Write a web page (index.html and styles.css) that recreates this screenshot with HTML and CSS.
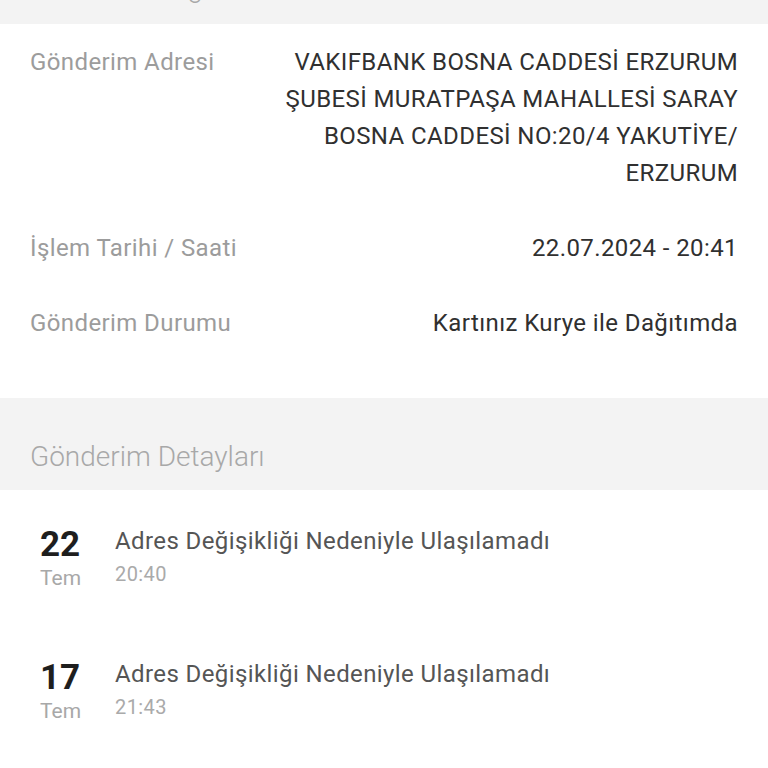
FILE: index.html
```html
<!DOCTYPE html>
<html lang="tr">
<head>
<meta charset="utf-8">
<link rel="stylesheet" href="styles.css">
</head>
<body>
<div class="section-head top"><span>Gönderim Bilgileri</span></div>
<div class="info">
  <div class="row">
    <div class="label">Gönderim Adresi</div>
    <div class="value addr">VAKIFBANK BOSNA CADDESİ ERZURUM ŞUBESİ MURATPAŞA MAHALLESİ SARAY BOSNA CADDESİ NO:20/4 YAKUTİYE/ ERZURUM</div>
  </div>
  <div class="row">
    <div class="label">İşlem Tarihi / Saati</div>
    <div class="value">22.07.2024 - 20:41</div>
  </div>
  <div class="row">
    <div class="label">Gönderim Durumu</div>
    <div class="value">Kartınız Kurye ile Dağıtımda</div>
  </div>
</div>
<div class="section-head mid"><span>Gönderim Detayları</span></div>
<div class="timeline">
  <div class="item">
    <div class="date"><div class="day">22</div><div class="mon">Tem</div></div>
    <div class="body"><div class="title">Adres Değişikliği Nedeniyle Ulaşılamadı</div><div class="time">20:40</div></div>
  </div>
  <div class="item">
    <div class="date"><div class="day">17</div><div class="mon">Tem</div></div>
    <div class="body"><div class="title">Adres Değişikliği Nedeniyle Ulaşılamadı</div><div class="time">21:43</div></div>
  </div>
</div>
</body>
</html>
```
FILE: styles.css
```css
html, body {
  margin: 0;
  padding: 0;
  background: #fff;
  font-family: Roboto, "Noto Sans", sans-serif;
  overflow: hidden;
}
.section-head {
  background: #f3f3f3;
  padding: 0 30px;
  color: #a8a8a8;
  font-size: 28px;
  font-weight: 300;
}
.section-head.top {
  height: 24px;
  overflow: hidden;
}
.section-head.top span {
  display: block;
  margin-top: -29px;
  line-height: 34px;
}
.section-head.mid {
  height: 92px;
  box-sizing: border-box;
  padding-top: 42px;
  line-height: 34px;
}
.info {
  padding: 20px 30px 56px 30px;
}
.row {
  display: flex;
  justify-content: space-between;
  align-items: flex-start;
  margin-bottom: 38px;
}
.row:last-child { margin-bottom: 0; }
.label {
  color: #9c9c9c;
  font-size: 24px;
  letter-spacing: 0.4px;
  line-height: 37px;
  white-space: nowrap;
}
.value {
  color: #303030;
  font-size: 24px;
  letter-spacing: 0.4px;
  line-height: 37px;
  text-align: right;
}
.addr {
  width: 470px;
}
.timeline {
  padding: 38px 0 0 40px;
}
.item {
  display: flex;
  margin-bottom: 67px;
}
.date {
  width: 75px;
}
.day {
  font-size: 35px;
  font-weight: 700;
  color: #1e1e1e;
  line-height: 34px;
}
.mon {
  color: #a8a8a8;
  font-size: 21px;
  line-height: 32px;
}
.body {
  margin-top: -4px;
}
.title {
  color: #555;
  font-size: 24px;
  letter-spacing: 0.4px;
  line-height: 34px;
}
.time {
  color: #aaa;
  font-size: 20px;
  letter-spacing: 0.4px;
  line-height: 32px;
}
```
